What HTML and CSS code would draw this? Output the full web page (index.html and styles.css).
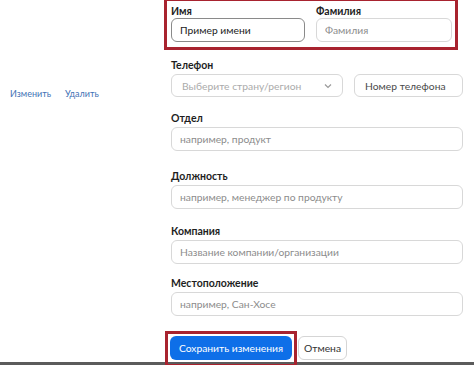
FILE: index.html
```html
<!DOCTYPE html>
<html>
<head>
    <title>Профиль</title>
    <link rel="stylesheet" href="styles.css">
</head>
<body>
    <div class="page">
        <div class="side">
            <a href="#" class="side-link">Изменить</a>
            <a href="#" class="side-link">Удалить</a>
        </div>
        <form class="profile-form">
            <div class="highlight name-row">
                <div class="field">
                    <label for="first-name">Имя</label>
                    <input type="text" id="first-name" class="input focused" value="Пример имени">
                </div>
                <div class="field wide">
                    <label for="last-name">Фамилия</label>
                    <input type="text" id="last-name" class="input" placeholder="Фамилия">
                </div>
            </div>
            <div class="form-group">
                <label>Телефон</label>
                <div class="phone-row">
                    <div class="input select">
                        <span class="placeholder">Выберите страну/регион</span>
                        <svg class="chevron" width="8" height="6" viewBox="0 0 8 6"><polyline points="1,1.5 4,4.5 7,1.5" fill="none" stroke="#9a9a9a" stroke-width="1.2"/></svg>
                    </div>
                    <input type="text" class="input phone" placeholder="Номер телефона">
                </div>
            </div>
            <div class="form-group g-dept">
                <label for="dept">Отдел</label>
                <input type="text" id="dept" class="input" placeholder="например, продукт">
            </div>
            <div class="form-group g-title">
                <label for="title">Должность</label>
                <input type="text" id="title" class="input" placeholder="например, менеджер по продукту">
            </div>
            <div class="form-group g-company">
                <label for="company">Компания</label>
                <input type="text" id="company" class="input" placeholder="Название компании/организации">
            </div>
            <div class="form-group g-location">
                <label for="location">Местоположение</label>
                <input type="text" id="location" class="input" placeholder="например, Сан-Хосе">
            </div>
            <div class="actions">
                <div class="highlight save-box">
                    <button type="submit" class="btn-primary">Сохранить изменения</button>
                </div>
                <button type="button" class="btn-default">Отмена</button>
            </div>
        </form>
    </div>
    <div class="footer-bar"></div>
</body>
</html>
```

FILE: styles.css
```css
body {
    margin: 0;
    padding: 0;
    background: #fff;
    font-family: Lato, "Open Sans", sans-serif;
    color: #232333;
    overflow: hidden;
}
.page {
    display: flex;
    height: 362px;
}
.side {
    width: 164px;
    padding: 88px 0 0 10px;
    box-sizing: border-box;
    display: flex;
    align-items: flex-start;
    gap: 14px;
}
.side-link {
    color: #3f72b5;
    font-size: 9px;
    text-decoration: none;
}
.profile-form {
    width: 300px;
    display: flex;
    flex-direction: column;
}
.highlight {
    border: 3px solid #a8232f;
}
.name-row {
    display: flex;
    gap: 11px;
    width: 294px;
    box-sizing: border-box;
    margin-top: -2px;
    padding: 3px 3px 5px 4px;
}
.field {
    width: 134px;
}
.field.wide {
    width: 136px;
}
label {
    display: block;
    font-size: 10.5px;
    font-weight: bold;
    line-height: 14px;
    color: #1e1e1e;
}
.input {
    display: block;
    width: 100%;
    height: 24px;
    padding: 0 8px;
    box-sizing: border-box;
    border: 1px solid #d8d8d8;
    border-radius: 6px;
    background: #fff;
    font-family: Lato, "Open Sans", sans-serif;
    font-size: 10.3px;
    color: #333;
    outline: none;
}
.input::placeholder {
    color: #8c8c8c;
}
.input.focused {
    border-color: #8a8a8a;
    color: #222;
}
.form-group {
    margin-top: 8px;
    margin-left: 7px;
    width: 292px;
}
.form-group label {
    margin-bottom: 2px;
}
.phone-row {
    display: flex;
    gap: 11px;
}
.select {
    width: 172px;
    height: 23px;
    display: flex;
    align-items: center;
    justify-content: space-between;
    padding: 0 10px 0 10px;
}
.placeholder {
    color: #ababab;
}
.phone {
    width: 109px;
    height: 23px;
    padding-left: 10px;
}
.phone::placeholder {
    color: #4a4a4a;
}
.g-dept {
    margin-top: 14px;
}
.g-title {
    margin-top: 18px;
}
.g-company {
    margin-top: 15px;
}
.g-location {
    margin-top: 12px;
}
.actions {
    display: flex;
    align-items: flex-start;
    margin-top: 15px;
    margin-left: 1px;
    position: relative;
    z-index: 1;
}
.save-box {
    padding: 2px 2px 4px 2px;
}
.btn-primary {
    display: block;
    height: 24px;
    width: 122px;
    padding: 0;
    white-space: nowrap;
    background: #0e6fe8;
    color: #fff;
    border: none;
    border-radius: 6px;
    font-family: Lato, "Open Sans", sans-serif;
    font-size: 10.3px;
    cursor: pointer;
}
.btn-default {
    height: 24px;
    width: 49px;
    margin-left: 1px;
    margin-top: 5px;
    background: #fff;
    color: #333;
    border: 1px solid #d5d5d5;
    border-radius: 6px;
    font-family: Lato, "Open Sans", sans-serif;
    font-size: 10.3px;
    padding: 0;
}
.footer-bar {
    height: 3px;
    background: #5b5b5b;
}
```
